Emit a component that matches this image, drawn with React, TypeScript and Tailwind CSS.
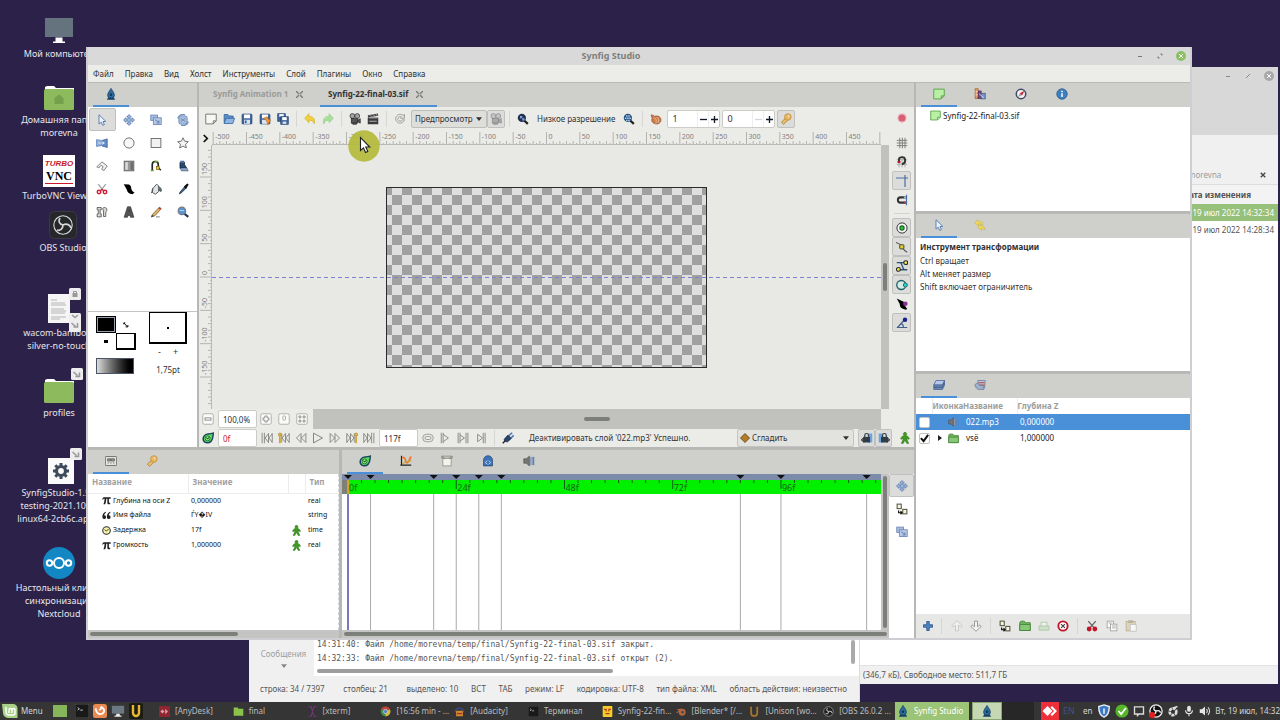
import React, { useState } from 'react';

type IconName = keyof typeof icons;

const blue = '#5b7fb5';
const ink = '#1d1f21';

// All glyphs are drawn on a 16x16 grid
const icons = {
  drop: (
    <>
      <path d="M8 .5c1 2.500 4.500 5.500 4.500 9a4.500 4.500 0 0 1-9 0C3.500 6 7 3 8 .5z" fill="#2b6c9e" stroke="#173f63" />
      <path d="M4 13h8l1.500 2.500h-11z" fill="#173f63" />
      <circle cx="8" cy="9" r="1.600" fill="#14344f" />
    </>
  ),
  arrow: <path d="M4 1v12.500l3-2.600 1.900 4.300 2.300-1-1.900-4.200h3.900z" fill="#eef3fa" stroke={blue} strokeWidth="1.300" />,
  move: (
    <g fill="#a9bfe0" stroke={blue} strokeWidth="1.200">
      <path d="M8 .8l3 3H9.200v3h3V5L15.300 8l-3.100 3V9.200h-3v3H11l-3 3-3-3h1.800v-3h-3V11L.7 8l3.100-3v1.800h3v-3H5z" />
    </g>
  ),
  scale: (
    <g fill="#a9bddd" stroke="#6f8cbb" strokeWidth="1.200">
      <rect x="1" y="1.500" width="9" height="7" />
      <rect x="4.500" y="5" width="10.500" height="9" fill="#b9cae6" />
      <path d="M7 7.500l5 4M12 8.500v3.500H8.500" fill="none" strokeWidth="1.500" />
    </g>
  ),
  rotate: (
    <g fill="#a9bddd" stroke="#6f8cbb" strokeWidth="1.200">
      <rect x="2.500" y="2.500" width="11" height="11" rx="2.500" />
      <path d="M1 6a7 7 0 0 1 9.500-5M15 10a7 7 0 0 1-9.500 5" fill="none" strokeWidth="1.700" />
      <path d="M5 6l6 4M11 6l-6 4" />
    </g>
  ),
  mirror: (
    <g>
      <path d="M.5 3.500l6.500 1v7l-6.500 1z" fill="#8fb0e0" stroke={blue} />
      <path d="M8 4.500l7-2v11.500l-7-2z" fill="#5f8bc9" stroke="#3d629a" />
      <path d="M3 8h8M8 6l3 2-3 2" stroke="#dce8f8" strokeWidth="1.300" fill="none" />
    </g>
  ),
  circle: <circle cx="8" cy="8" r="6.800" fill="#f7f7f7" stroke="#666" strokeWidth="1.200" />,
  rect: <rect x="1.500" y="2" width="13" height="12" fill="#f2f2f2" stroke="#666" strokeWidth="1.200" />,
  star: <path d="M8 1l2.100 4.600 5 .6-3.700 3.400 1 5L8 12.100l-4.400 2.500 1-5L.9 6.200l5-.6z" fill="#f5f5f5" stroke="#666" strokeWidth="1.200" />,
  polygon: <path d="M1 9l7-6.500L15 8l-4.500 6-3-1.700 2-3.300L6.500 7 4 10.500z" fill="#f0f0f0" stroke="#777" strokeWidth="1.200" />,
  gradient: (
    <g stroke="#555">
      <rect x="1.500" y="1.500" width="13" height="13" fill="#999" />
      <rect x="3" y="3" width="3.500" height="10" fill="#d9d9d9" stroke="none" />
      <rect x="10" y="3" width="3.500" height="10" fill="#6d6d6d" stroke="none" />
    </g>
  ),
  spline: (
    <g fill="none">
      <path d="M3 14V6a4 4 0 0 1 8 0c0 4 0 5 3.500 7.500" stroke="#222" strokeWidth="2.200" />
      <path d="M1 14h4M6 2h5" stroke="#6da32f" strokeWidth="2.200" />
      <rect x="8.500" y="8.500" width="3.500" height="4" fill="#f6d32d" stroke="#7a6a10" />
    </g>
  ),
  bucket: (
    <g>
      <path d="M4 3h6v3l3 5H4z" fill="#27496f" stroke="#111d2c" />
      <rect x="4.500" y="1" width="5" height="3" fill="#4b6f99" />
      <path d="M4 10.500h9l2 4H6z" fill="#8fa9c9" stroke="#2a3f5a" strokeWidth=".7" />
    </g>
  ),
  scissors: (
    <g fill="none">
      <path d="M3 1.500l6 8M13 1.500l-6 8" stroke="#a6a6a6" strokeWidth="1.800" />
      <circle cx="4" cy="12" r="2.300" stroke="#cf1f35" strokeWidth="2" />
      <circle cx="12" cy="12" r="2.300" stroke="#cf1f35" strokeWidth="2" />
      <path d="M5.500 10.500L8 8.500l2.500 2" stroke="#cf1f35" strokeWidth="1.700" />
    </g>
  ),
  width: <path d="M1 1.500l7 .5c2 .8 3 3 3 5.500 1 3 2.500 4 4.500 5L12.500 15C8 14.500 5.500 12 5 8.500z" fill="#000" />,
  fill: (
    <g stroke="#333" strokeWidth="1">
      <path d="M4 7l5-5.500L11.500 4v7.500L7 15l-4-2.500z" fill="#dfe3e6" />
      <path d="M11 5c3 0 4.500 3 4 6-2.500.5-3-1.500-3-3" fill="#5e7c8a" />
      <path d="M1.500 13.500c2-2 1-4 2-6.500" fill="none" />
    </g>
  ),
  eyedrop: (
    <g>
      <path d="M14.500 1.500l-4 3-6 7-1.500 3 3-1.500 6-6z" fill="#356393" stroke="#1b2b3c" />
      <path d="M9 5l3 3 3.500-6-2-1.500z" fill="#111" />
    </g>
  ),
  skeleton: (
    <g fill="#d6d6d2" stroke="#444">
      <path d="M1.500 2h5.500v3H5.500v5.500H7v4H1.500v-4H3V5H1.500z" />
      <path d="M9 3c2-2 5.500-1 5.500 2 0 2-1.500 2-1.500 4v5h-3V8z" />
    </g>
  ),
  text: <path d="M6 1h4l4.500 14H10l-.6-2.500H6.600L6 15H1.500zM7.300 9.500h1.500L8 5.500z" fill="#555" stroke="#222" strokeWidth=".8" fillRule="evenodd" />,
  pencil: (
    <g>
      <path d="M12.500 1.500l2.500 2L6.500 13 2 14.500 3.500 11z" fill="#e3b56c" stroke="#7a5121" />
      <path d="M11 3l2.500 2L15 3.500l-2.500-2z" fill="#b83c32" />
      <path d="M2 14.500l1-2.500 1.500 1.500zM8 14.500h5" fill="#222" stroke="#555" />
    </g>
  ),
  zoom: (
    <g>
      <path d="M9.500 10l5.500 4.500" stroke="#22324d" strokeWidth="2.800" />
      <circle cx="6.500" cy="6.500" r="5" fill="#5a93cf" stroke="#75797f" strokeWidth="1.500" />
      <path d="M3.500 6h6" stroke="#cfe3fa" />
    </g>
  ),
  newfile: <path d="M1 1.500h14v9L11 14.500H1zM15 10.500h-4v4" fill="#f7f7f3" stroke="#777" strokeWidth="1.300" />,
  open: (
    <g stroke="#2c5d95">
      <path d="M1.500 13V2h5L8 4h5.500v3" fill="#5c8fca" />
      <path d="M1.500 14L4 7h11.500L13 14z" fill="#8db6e4" />
    </g>
  ),
  save: (
    <g>
      <rect x="1.500" y="1.500" width="13" height="13" rx="1" fill="#3e66a0" stroke="#20406d" />
      <rect x="4" y="2" width="8" height="5" fill="#fff" />
      <rect x="4" y="9" width="8" height="5.500" fill="#dde3ea" />
      <rect x="5" y="10" width="2.500" height="3.500" fill="#3e66a0" />
    </g>
  ),
  saveas: (
    <g>
      <rect x="1.500" y="1.500" width="13" height="13" rx="1" fill="#3e66a0" stroke="#20406d" />
      <rect x="4" y="2" width="8" height="5" fill="#fff" />
      <rect x="4" y="9" width="8" height="5.500" fill="#dde3ea" />
      <path d="M6 7l5-2 1 3 3.500 1L12 15.500 10 10z" fill="#f29a3a" stroke="#b65d10" strokeWidth=".8" />
    </g>
  ),
  saveall: (
    <g stroke="#20406d">
      <rect x="1" y="1" width="10" height="10" fill="#3e66a0" />
      <rect x="3" y="1.500" width="6" height="3.500" fill="#fff" stroke="none" />
      <rect x="5" y="5" width="10" height="10" fill="#3e66a0" />
      <rect x="7" y="5.500" width="6" height="4" fill="#fff" stroke="none" />
      <rect x="7.500" y="11.500" width="5" height="3" fill="#dde3ea" stroke="none" />
    </g>
  ),
  undo: <path d="M6.500 1v3.500c5 0 9 2.500 7 10-.5-3.500-3-5-7-5V13L1 7z" fill="#f2d13c" stroke="#d0a817" strokeWidth=".8" />,
  redo: <path d="M9.500 1v3.500c-5 0-9 2.500-7 10 .5-3.500 3-5 7-5V13L15 7z" fill="#a8e09b" stroke="#86cc79" strokeWidth=".8" />,
  camera: (
    <g fill="#555" stroke="#222" strokeWidth=".9">
      <circle cx="4.500" cy="4" r="3.200" fill="#a5a5a5" />
      <circle cx="11" cy="4" r="3.200" fill="#a5a5a5" />
      <rect x="3" y="7.500" width="8.500" height="6" />
      <path d="M11.500 9.500l3.500-2v6l-3.500-2zM5 13.500h5V15H5z" />
    </g>
  ),
  cameraOff: (
    <g fill="#aaa" stroke="#858585" strokeWidth=".9">
      <circle cx="4.500" cy="4" r="3.200" fill="#c5c5c5" />
      <circle cx="11" cy="4" r="3.200" fill="#c5c5c5" />
      <rect x="3" y="7.500" width="8.500" height="6" />
      <path d="M11.500 9.500l3.500-2v6l-3.500-2zM5 13.500h5V15H5z" />
    </g>
  ),
  clapper: (
    <g>
      <path d="M1 3L14.500.5l.5 3L1.500 6z" fill="#444" />
      <rect x="1" y="6" width="14" height="9" fill="#3b3b3b" />
      <path d="M4 3l2 2M8 2l2 2M12 1.500l1.500 2M3 6.500h11M3 11h10" stroke="#bbb" strokeWidth="1.200" />
    </g>
  ),
  refresh: <path d="M12.500 3.500A6 6 0 1 0 14 9h-3a3 3 0 1 1-1-3.500L8.500 7H14V1.500z" fill="#e3e3e0" stroke="#a3a3a3" strokeWidth="1.300" />,
  resDown: (
    <g>
      <path d="M9 9.500l5.500 5" stroke="#222" strokeWidth="2.800" />
      <circle cx="6.500" cy="6.500" r="5.500" fill="#23324e" />
      <path d="M4 4h3v3H4zM7 7h3v3H7z" fill="#7ba3dd" />
    </g>
  ),
  resUp: (
    <g>
      <path d="M9 9.500l5.500 5" stroke="#222" strokeWidth="2.800" />
      <circle cx="6.500" cy="6.500" r="5.500" fill="#24507c" />
      <path d="M4 3h2v2H4zM7 3h2v2H7zM2.500 6h2v2h-2zM5.500 6h2v2h-2zM8.500 6h2v2h-2zM4 9h2v2H4zM7 9h2v2H7z" fill="#b9d5f5" />
    </g>
  ),
  onion: (
    <g>
      <path d="M1.500 2.500c2 0 3.500 1 4.500 2C10 3 15 5 14.500 10c-.5 4-5 5.500-8.500 4S1.500 10 3 7z" fill="#cf7e4e" stroke="#8b4a26" />
      <path d="M5 6c3 1 4 4 3 8M9 5c2.500 2 3 5 2 8" fill="none" stroke="#f0c3a2" />
    </g>
  ),
  key: (
    <g>
      <path d="M9.500 7.500l-6.500 6.500" stroke="#b5852f" strokeWidth="5" />
      <path d="M9.500 7.500l-6 6" stroke="#e8bd70" strokeWidth="3.200" />
      <circle cx="10.500" cy="5.300" r="4.400" fill="#e8b965" stroke="#c08a38" />
      <circle cx="11.500" cy="4.300" r="1.200" fill="#f7e2b7" />
    </g>
  ),
  record: <circle cx="8" cy="8" r="5.500" fill="#d95f74" stroke="#efb9c1" strokeWidth="1.500" />,
  grid: <path d="M5 1v14M8.500 1v14M12 1v14M1 4.500h14M1 8h14M1 11.500h14" stroke="#777" strokeWidth="1.200" />,
  snapGrid: (
    <g fill="none">
      <path d="M4 1v14M8 1v14M12 1v14M1 5h14M1 11h14" stroke="#999" />
      <path d="M4 9V6a4 4 0 0 1 8-1c1 4-1 5-4 6" stroke="#333" strokeWidth="2.500" />
      <path d="M2 8h4" stroke="#c4172b" strokeWidth="2.500" />
    </g>
  ),
  guide: <path d="M0 4h16M12 0v16" stroke="#4a6fa5" strokeWidth="1.600" />,
  snapGuide: (
    <g fill="none">
      <path d="M14 1v14" stroke="#4a6fa5" strokeWidth="1.600" />
      <path d="M13 4.500H6a3.500 3.500 0 0 0 0 7h7" stroke="#333" strokeWidth="2.700" />
      <path d="M10.500 4.500H13" stroke="#a4b8c9" strokeWidth="2.700" />
      <path d="M10.500 11.500H13" stroke="#b13543" strokeWidth="2.700" />
    </g>
  ),
  position: (
    <g>
      <circle cx="8" cy="8" r="6.800" fill="#f3f7f3" stroke="#333" strokeWidth="1.300" />
      <circle cx="8" cy="8" r="2.800" fill="#27c83a" stroke="#1b5e22" strokeWidth="1.500" />
    </g>
  ),
  vertex: (
    <g>
      <path d="M0 2c4 1 6 3 7.500 5s2 5 7.500 8" fill="none" stroke="#555" strokeWidth="1.600" />
      <rect x="5" y="5" width="5.500" height="5.500" rx="1" fill="#e3d12c" stroke="#333" strokeWidth="1.200" />
    </g>
  ),
  tangent: (
    <g fill="none" stroke="#223" strokeWidth="1.400">
      <path d="M1 3.500h11M4 13h11M6 4c3 2 2 6 5 9" stroke="#2b5672" strokeWidth="1.700" />
      <circle cx="13" cy="3.500" r="2.600" fill="#f1e63c" />
      <circle cx="3.200" cy="12.500" r="2.600" fill="#f1e63c" />
    </g>
  ),
  radius: (
    <g>
      <circle cx="7" cy="8" r="6" fill="#d9ebe9" stroke="#1e6161" strokeWidth="1.700" />
      <circle cx="12.500" cy="8" r="2.700" fill="#29d3d3" stroke="#1e6161" strokeWidth="1.200" />
    </g>
  ),
  widthHandle: (
    <g>
      <path d="M1 .5l7 3.500c3 1 3 2 3 5l4 5.500-2 1C7 14.500 5 12 5 8z" fill="#000" />
      <circle cx="12.500" cy="7.500" r="3" fill="#8c2f9b" />
    </g>
  ),
  angle: (
    <g>
      <path d="M2 14L12 3M1 14h14M7 8.500c2 1 3 3 3 5.500" fill="none" stroke="#44618b" strokeWidth="1.600" />
      <circle cx="12" cy="3.500" r="3" fill="#16228c" />
    </g>
  ),
  zoomOut: (
    <g fill="#fbfbfa" stroke="#8a8a88" strokeWidth="1.200">
      <rect x="1" y="1" width="14" height="14" rx="2" stroke="#aaa" />
      <rect x="4" y="6.500" width="8" height="3" />
    </g>
  ),
  zoomIn: (
    <g fill="#fbfbfa" stroke="#8a8a88" strokeWidth="1.200">
      <rect x="1" y="1" width="14" height="14" rx="2" stroke="#aaa" />
      <path d="M6.500 4h3v2.500H12v3H9.500V12h-3V9.500H4v-3h2.500z" />
    </g>
  ),
  zoomNorm: (
    <g fill="#fbfbfa" stroke="#a5a5a3" strokeWidth="1.200">
      <rect x="1" y="1" width="14" height="14" rx="2" stroke="#aaa" />
      <rect x="6.500" y="4" width="3.500" height="5.500" rx="1" />
    </g>
  ),
  zoomFit: (
    <g fill="#fbfbfa" stroke="#8a8a88" strokeWidth="1.200">
      <rect x="1" y="1" width="14" height="14" rx="2" stroke="#aaa" />
      <path d="M4 4h2.500v2.500H4zM9.500 4H12v2.500H9.500zM4 9.500h2.500V12H4zM9.500 9.500H12V12H9.500z" />
    </g>
  ),
  timetrack: (
    <g>
      <path d="M15 1.500c-.5 5 0 8-3 11-3 3-8.500 2.500-10-1C.5 7 3.500 3 8 2.500c3 0 5.500-.5 7-1z" fill="#57dd5e" stroke="#1d4562" strokeWidth="2" />
      <circle cx="7.500" cy="8.500" r="3.300" fill="#8bef8b" stroke="#155c1a" />
      <path d="M6 7.500l1.500 2 2-2.500" fill="none" stroke="#111" strokeWidth="1.200" />
    </g>
  ),
  curves: (
    <g fill="none">
      <path d="M2 1v13M.5 13.500H15" stroke="#222" strokeWidth="1.600" />
      <path d="M3 4c2-2 4 0 4.500 4s4 3 7-6" stroke="#ec7a2b" strokeWidth="2.400" />
      <path d="M3 11.500c4-1 6-4 12-4" stroke="#c9a23f" strokeWidth="1.400" />
    </g>
  ),
  canvases: (
    <g fill="#f4f4ee" stroke="#8b8b80">
      <rect x="2.500" y="4" width="11" height="10.500" />
      <path d="M1 1.500h14v3H1z" fill="#c9c9bd" />
      <path d="M1 1.500L5 5M15 1.500L11 5" strokeWidth="1.500" />
    </g>
  ),
  keyBag: (
    <g>
      <path d="M2 14.500V7a6 6 0 0 1 12 0v7.500z" fill="#3f73b5" stroke="#24497c" />
      <path d="M7 7.500L4.500 10 7 12.500M9 7.500l2.500 2.500L9 12.500" fill="none" stroke="#cfe0f8" strokeWidth="1.200" />
    </g>
  ),
  sound: (
    <g>
      <path d="M1 5h3.500l4-3.500v13l-4-3.500H1z" fill="#757575" stroke="#3d3d3d" strokeWidth=".7" />
      <rect x="9.500" y="2.500" width="2" height="11" fill="#8a97aa" />
      <rect x="12.500" y="2.500" width="2.500" height="11" fill="#5c83ba" />
    </g>
  ),
  params: (
    <g fill="#e4e4df" stroke="#555">
      <rect x=".5" y="2" width="15" height="12" rx="1" />
      <path d="M3.500 5h4v3h-4zM8.500 5h4v3h-4zM3.500 10.500h2M7 10.500h2M10.500 10.500h2" fill="#999" />
    </g>
  ),
  pi: <path d="M.5 6c.5-3 2-3.800 4-3.800h11V5H12.300v6c0 1.200 1 1.500 2.200.8v2.200c-2.700 1.200-5 .5-5-2.200V5H7.500c0 4-.5 7-1.800 9.800H2.500c1.400-2.800 2-6 2-9.800-1.700 0-2.200.3-2.700 1.500z" fill={ink} />,
  quote: <path d="M6.500 1.500C2 4 .5 7 .7 10.500A3.300 3.300 0 1 0 4 7.500C4 6 5 4 7 3zM14.500 1.500C10 4 8.500 7 8.700 10.500a3.300 3.300 0 1 0 3.300-3C12 6 13 4 15 3z" fill={ink} />,
  clock: (
    <g>
      <circle cx="8" cy="8" r="6.700" fill="#f4f3a8" stroke="#333" strokeWidth="2" />
      <path d="M4.500 6.500L8 9l4-4" fill="none" stroke="#333" strokeWidth="1.600" />
    </g>
  ),
  man: <path d="M8 .5a2.200 2.200 0 0 1 1.300 4L12 6l2 3-1.500.8L10.800 8v2.500l2.200 4.700h-2.600L8 11l-2.400 4.200H3l2.200-4.700V8L3.500 9.800 2 9l2-3 2.700-1.500A2.200 2.200 0 0 1 8 .5z" fill="#3f9a22" stroke="#25660f" strokeWidth=".6" />,
  waypoint: <path d="M8 .8L15.200 8 8 15.200.8 8z" fill="#b57c22" stroke="#4a3413" strokeWidth="1.200" />,
  lockPast: (
    <g>
      <path d="M10 2h5v12h-5z" fill="#6aa3de" />
      <rect x="3" y="6.500" width="9" height="7.500" fill="#333c45" />
      <path d="M5 7V4.500a2.500 2.500 0 0 1 5 0V7M.5 10.500l3-2.500v5z" fill="none" stroke="#333c45" strokeWidth="1.600" />
    </g>
  ),
  lockFuture: (
    <g>
      <path d="M1 2h5v12H1z" fill="#6aa3de" />
      <rect x="4" y="6.500" width="9" height="7.500" fill="#333c45" />
      <path d="M6 7V4.500a2.500 2.500 0 0 1 5 0V7M15.500 10.500l-3-2.500v5z" fill="none" stroke="#333c45" strokeWidth="1.600" />
    </g>
  ),
  plug: (
    <g>
      <path d="M1 15l4-4" stroke="#222" strokeWidth="2" />
      <path d="M3 9.500l5-5.500 4.500 4.500-5 4.500C5 13.500 2.500 12 3 9.500z" fill="#27456b" stroke="#16283f" />
      <path d="M9 5l4.500-4M12 8l3.500-3.500" stroke="#4c78ae" strokeWidth="2.200" />
    </g>
  ),
  first: <path d="M1.500 1v14M4.500 1v14M10 2L5.500 8l4.500 6zM15 2l-4.500 6 4.500 6z" fill="none" stroke="#82827f" strokeWidth="1.200" />,
  prevKey: (
    <g fill="none" stroke="#82827f" strokeWidth="1.200">
      <path d="M10 2L5.500 8l4.500 6zM15 2l-4.500 6 4.500 6zM5 2v12" />
      <path d="M2.500 6v9" stroke="#d0a63a" strokeWidth="2.500" />
      <circle cx="2.500" cy="3.500" r="2" fill="#e2bb50" stroke="#b08a2c" />
    </g>
  ),
  prev: <path d="M8 2L2 8l6 6zM14.500 2l-6 6 6 6z" fill="none" stroke="#82827f" strokeWidth="1.200" />,
  play: <path d="M2 1.500L14 8 2 14.500z" fill="none" stroke="#82827f" strokeWidth="1.300" />,
  next: <path d="M8 2l6 6-6 6zM1.500 2l6 6-6 6z" fill="none" stroke="#82827f" strokeWidth="1.200" />,
  nextKey: (
    <g fill="none" stroke="#82827f" strokeWidth="1.200">
      <path d="M6 2l4.500 6L6 14zM1 2l4.500 6L1 14zM11 2v12" />
      <path d="M13.500 6v9" stroke="#d0a63a" strokeWidth="2.500" />
      <circle cx="13.500" cy="3.500" r="2" fill="#e2bb50" stroke="#b08a2c" />
    </g>
  ),
  last: <path d="M14.500 1v14M11.500 1v14M6 2l4.500 6L6 14zM1 2l4.500 6L1 14z" fill="none" stroke="#82827f" strokeWidth="1.200" />,
  loop: (
    <g fill="none" stroke="#9b9b98" strokeWidth="1.300">
      <rect x="1" y="3" width="14" height="10" rx="5" />
      <rect x="4" y="6" width="8" height="4" rx="2" />
    </g>
  ),
  boundIn: <path d="M3 1v14M5.500 1v14M5.500 3l7 5-7 5" fill="none" stroke="#82827f" strokeWidth="1.200" />,
  bounds: <path d="M1.500 1v14M4 1v14M4 4l6 4-6 4M12 1v14M14.500 1v14" fill="none" stroke="#82827f" strokeWidth="1.200" />,
  boundOut: <path d="M3.500 3l6.500 5-6.500 5zM11 1v14M13.500 1v14" fill="none" stroke="#82827f" strokeWidth="1.200" />,
  note: <path d="M1 1.500h14v9L11 14.500H1zM15 10.500h-4v4" fill="#b9f0a5" stroke="#5fa34c" strokeWidth="1.300" />,
  library: (
    <g>
      <rect x="1.500" y="1" width="4" height="13" fill="#e2a06b" stroke="#a7602c" />
      <rect x="5.500" y="4" width="4" height="10" fill="#7a4a84" stroke="#4f2a59" />
      <rect x="9.500" y="7" width="5.500" height="7.500" fill="#7894c4" stroke="#3d5b8f" />
      <path d="M2 5h3M2 9h3M7 8l6 5" stroke="#fff" />
    </g>
  ),
  compass: (
    <g>
      <circle cx="8" cy="8" r="6.300" fill="#f7eeee" stroke="#3b4a66" strokeWidth="2" />
      <path d="M12.500 3.500L9.500 10l-3-3z" fill="#c81d30" />
      <path d="M4 12l5-2.500L6.500 7z" fill="#9a9a9a" />
    </g>
  ),
  info: (
    <g>
      <circle cx="8" cy="8" r="7" fill="#3f7fbf" stroke="#28598e" />
      <path d="M7 7h2v5H7zM7 3.500h2v2H7z" fill="#fff" />
    </g>
  ),
  history: (
    <g fill="#efd95f" stroke="#cbb43a" strokeWidth=".8">
      <path d="M5 1l.5 2.700c4.500-1 7 1 6 4.500-1-2-3-2-5.500-1.500L6.500 9.500 1 5z" />
      <path d="M8.500 7.500l.5 2c3-.5 6 1 5 5-1.500-2-2.500-2-4.500-2l.5 2.500-5-4z" />
    </g>
  ),
  layers: (
    <g stroke="#4a6390">
      <path d="M4 2h11.500l-3 6H1z" fill="#b4c9ea" />
      <path d="M1 8h11.500l3-6v3l-3 6H1zM1 11h11.500l3-6v3l-3 6H1z" fill="#6d87b3" />
    </g>
  ),
  palette: (
    <g stroke="#6a7898">
      <path d="M5 2h10l-1 10H6z" fill="#b9c8e0" />
      <path d="M6 5h8M6 8h8" stroke="#c0392b" strokeWidth="1.300" />
      <path d="M1 8c2-3 5-3 6.500.5l5.500.5v5H7c-3 0-5-3-6-6z" fill="#9fb0cc" />
    </g>
  ),
  folder: (
    <g stroke="#3f7d33">
      <path d="M1 14V3l1.500-1.500h4.500L8.500 3.500H15V14z" fill="#6fb35f" />
      <path d="M1 14V6h14v8z" fill="#86c877" />
    </g>
  ),
  folderDim: (
    <g stroke="#a5bfa0">
      <path d="M4 8V3h8v5" fill="#eef3ec" />
      <path d="M1.500 13.500V8h13v5.500z" fill="#cfe0ca" />
    </g>
  ),
  group: (
    <g fill="#f4f4e4" stroke="#55553a" strokeWidth="1.400">
      <rect x="1.500" y="1.500" width="5.500" height="6" />
      <rect x="9" y="8.500" width="5.500" height="6" />
      <path d="M3.500 10v3h4M6 11l2 2-2 2" fill="none" stroke="#111" strokeWidth="1.600" />
    </g>
  ),
  plus: <path d="M6.300 2h3.400v4.300H14v3.400H9.700V14H6.300V9.700H2V6.300h4.300z" fill="#4f83c4" stroke="#234f8a" />,
  up: <path d="M8 1l7 6.500-2 1.700L10 7v7.500H6V7L3 9.200 1 7.500z" fill="#f0f0ee" stroke="#bdbdba" />,
  down: <path d="M8 15l7-6.500-2-1.700L10 9V1.500H6V9L3 6.800 1 8.500z" fill="#f4f4f2" stroke="#7e7e7b" />,
  remove: (
    <g fill="none" stroke="#c3152a">
      <circle cx="8" cy="8" r="6.200" strokeWidth="2.500" fill="#fff" />
      <path d="M5.500 5.500l5 5M10.500 5.500l-5 5" stroke="#444" strokeWidth="1.600" />
    </g>
  ),
  cut: (
    <g>
      <path d="M3 1.500l7 8M13 1.500l-7 8" stroke="#666" strokeWidth="1.800" />
      <circle cx="4.200" cy="12" r="3.200" fill="#c3152a" />
      <circle cx="11.800" cy="12" r="3.200" fill="#c3152a" />
    </g>
  ),
  copy: (
    <g fill="#fafafa" stroke="#999">
      <rect x="1.500" y="1.500" width="8.500" height="9" />
      <rect x="6" y="5.500" width="8.500" height="9" />
      <path d="M8 8h5M8 10.500h5M3.500 4h4" />
    </g>
  ),
  paste: (
    <g fill="#ded3bb" stroke="#b5a98e">
      <rect x="1.500" y="2" width="12" height="12.500" />
      <rect x="5" y="1" width="5" height="2.500" fill="#bbb" />
      <path d="M7 6h8v9H7z" fill="#f7f7f7" stroke="#bbb" />
    </g>
  ),
};

function Icon({ name, className = 'size-3' }: { name: IconName; className?: string }) {
  return (
    <svg viewBox="0 0 16 16" className={`${className} shrink-0`} aria-hidden="true">
      {icons[name]}
    </svg>
  );
}

interface IconButtonProps {
  icon: IconName;
  label: string;
  pressed?: boolean;
  className?: string;
}

function IconButton({ icon, label, pressed, className = 'size-[18px]' }: IconButtonProps) {
  return (
    <button
      aria-label={label}
      aria-pressed={pressed}
      className={`${className} shrink-0 flex items-center justify-center rounded-xs border ${
        pressed ? 'bg-[#dcddda] border-[#c0c1be]' : 'border-transparent hover:bg-black/5'
      }`}
    >
      <Icon name={icon} />
    </button>
  );
}

function Separator() {
  return <span className="w-px h-4 mx-1 bg-[#d6d6d2] shrink-0" />;
}

// Notebook tabs made of icons, used by every dock
function DockTabs({ tabs }: { tabs: { icon: IconName; label: string }[] }) {
  const [active, setActive] = useState(0);
  return (
    <div role="tablist" className="h-[25px] shrink-0 flex gap-[5px] px-[5px] bg-[#cfcfcb] border-t border-[#b9bab6]">
      {tabs.map((tab, i) => (
        <button
          key={tab.label}
          role="tab"
          aria-label={tab.label}
          aria-selected={i === active}
          onClick={() => setActive(i)}
          className={`w-9 flex items-center justify-center border-b-2 ${i === active ? 'border-[#4a90d9]' : 'border-transparent'}`}
        >
          <Icon name={tab.icon} />
        </button>
      ))}
    </div>
  );
}

function Spin({ label, value, minusOff }: { label: string; value: string; minusOff?: boolean }) {
  return (
    <div className="w-[53px] h-[18px] mr-0.5 flex bg-white border border-[#cbcbc8] rounded-xs text-[9px] shrink-0">
      <input aria-label={label} defaultValue={value} className="w-0 flex-1 min-w-0 pl-1 outline-none" />
      <button aria-label={`${label} −`} className={`w-[11px] border-l border-[#eee] flex items-center justify-center ${minusOff ? 'text-gray-300' : 'text-gray-900'}`}>
        <svg viewBox="0 0 8 8" className="size-[7px]"><path d="M0 4h8" stroke="currentColor" strokeWidth="1.500" /></svg>
      </button>
      <button aria-label={`${label} +`} className="w-[11px] border-l border-[#eee] flex items-center justify-center text-gray-900">
        <svg viewBox="0 0 8 8" className="size-[7px]"><path d="M0 4h8M4 0v8" stroke="currentColor" strokeWidth="1.500" /></svg>
      </button>
    </div>
  );
}

const menu = ['Файл', 'Правка', 'Вид', 'Холст', 'Инструменты', 'Слой', 'Плагины', 'Окно', 'Справка'];

const tools: { icon: IconName; label: string }[] = [
  { icon: 'arrow', label: 'Трансформация' },
  { icon: 'move', label: 'Плавное перемещение' },
  { icon: 'scale', label: 'Масштаб' },
  { icon: 'rotate', label: 'Вращение' },
  { icon: 'mirror', label: 'Зеркало' },
  { icon: 'circle', label: 'Круг' },
  { icon: 'rect', label: 'Прямоугольник' },
  { icon: 'star', label: 'Звезда' },
  { icon: 'polygon', label: 'Многоугольник' },
  { icon: 'gradient', label: 'Градиент' },
  { icon: 'spline', label: 'Сплайн' },
  { icon: 'bucket', label: 'Чернила' },
  { icon: 'scissors', label: 'Вырезание' },
  { icon: 'width', label: 'Ширина' },
  { icon: 'fill', label: 'Заливка' },
  { icon: 'eyedrop', label: 'Пипетка' },
  { icon: 'skeleton', label: 'Скелет' },
  { icon: 'text', label: 'Текст' },
  { icon: 'pencil', label: 'Эскиз' },
  { icon: 'zoom', label: 'Лупа' },
];

function Toolbox() {
  return (
    <section className="w-[109px] shrink-0 flex flex-col bg-white">
      <DockTabs tabs={[{ icon: 'drop', label: 'Инструменты' }]} />
      <div className="grid grid-cols-4 p-px">
        {tools.map((tool, i) => (
          <IconButton key={tool.label} icon={tool.icon} label={tool.label} pressed={i === 0} className="h-[23px]" />
        ))}
      </div>
      <div className="mt-auto h-[136px] flex justify-between pl-2 pr-2.5 border-t border-[#c4c4c2]">
        <div className="w-10 pt-1">
          <div className="grid grid-cols-2 items-center justify-items-center">
            <button aria-label="Цвет контура" className="w-5 h-[17px] bg-black border border-black outline-1 -outline-offset-2 outline-gray-400" />
            <svg viewBox="0 0 8 8" className="size-1.5"><path d="M1.500 1.500l4 4.500M1 3V1.200h2M3.500 6.500H6.500V4" stroke="#000" fill="none" strokeWidth="1.300" /></svg>
            <span className="w-1 h-[3px] bg-black" />
            <button aria-label="Цвет заливки" className="w-5 h-[17px] bg-white border border-b-2 border-r-2 border-black" />
          </div>
          <button aria-label="Градиент по умолчанию" className="block mt-2 w-[38px] h-4 border border-gray-600 bg-linear-to-r from-[#ddd] to-black" />
        </div>
        <div className="w-[38px] flex flex-col items-center">
          <button aria-label="Размер кисти" className="w-[38px] h-8 bg-white border border-b-2 border-r-2 border-black flex items-center justify-center">
            <span className="size-[2px] bg-black" />
          </button>
          <div className="flex gap-3 text-[9px] leading-4">
            <button>-</button>
            <button>+</button>
          </div>
          <span className="text-[8px] leading-5">1,75pt</span>
        </div>
      </div>
    </section>
  );
}

const unit = 2 / 3;

// Both rulers grow from the middle of the canvas, where zero is
function HorizontalRuler() {
  const ticks = Array.from({ length: 201 }, (_, i) => -500 + i * 5);
  return (
    <svg className="flex-1 min-w-0 h-[14px] border-b border-[#b9bab6]" aria-hidden="true">
      <svg x="50%" className="overflow-visible">
        {ticks.map((t) => (
          <path key={t} d={`M${t * unit} ${t % 50 === 0 ? 1 : t % 10 === 0 ? 10 : 12}V14`} stroke="#b3b4b1" />
        ))}
        {ticks.filter((t) => t % 50 === 0 && t < 500).map((t) => (
          <text key={t} x={t * unit + 2} y="8" fontSize="7" fill="#80817e">{t}</text>
        ))}
      </svg>
    </svg>
  );
}

function VerticalRuler() {
  const ticks = Array.from({ length: 77 }, (_, i) => -190 + i * 5);
  return (
    <svg className="w-[13px] h-full shrink-0 border-r border-[#b9bab6]" aria-hidden="true">
      <svg y="50%" className="overflow-visible">
        {ticks.map((t) => (
          <path key={t} d={`M${t % 50 === 0 ? 1 : t % 10 === 0 ? 9 : 11} ${-t * unit}H13`} stroke="#b3b4b1" />
        ))}
        {[150, 100, 50, 0, -50, -100, -150].map((t) => (
          <text key={t} x="2" y="8" fontSize="7" fill="#80817e" transform={`translate(0 ${-t * unit}) rotate(-90)`}>{t}</text>
        ))}
      </svg>
    </svg>
  );
}

const handles: { icon: IconName; label: string; pressed?: boolean }[] = [
  { icon: 'position', label: 'Позиция', pressed: true },
  { icon: 'vertex', label: 'Вершины', pressed: true },
  { icon: 'tangent', label: 'Касательные', pressed: true },
  { icon: 'radius', label: 'Радиус', pressed: true },
  { icon: 'widthHandle', label: 'Ширина' },
  { icon: 'angle', label: 'Угол', pressed: true },
];

function CanvasPanel() {
  return (
    <section className="flex-1 min-w-0 flex flex-col bg-[#ebebe8]">
      <div role="tablist" className="h-[25px] shrink-0 flex bg-[#cfcfcb] border-t border-[#b9bab6] text-[8px] font-bold">
        <button role="tab" className="w-[121px] pl-3.5 flex items-center gap-2 text-[#9a9b98] border-b-2 border-transparent">
          Synfig Animation 1
          <CloseMark />
        </button>
        <button role="tab" aria-selected="true" className="w-[117px] pl-2 flex items-center gap-2 text-[#303234] border-b-2 border-[#4a90d9]">
          Synfig-22-final-03.sif
          <CloseMark />
        </button>
      </div>

      <div className="flex-1 min-h-0 flex">
        <div className="flex-1 min-w-0 flex flex-col">
          <div className="h-6 shrink-0 flex items-center pl-[3px] text-[8px] text-[#303234]">
            <IconButton icon="newfile" label="Новый" />
            <IconButton icon="open" label="Открыть" />
            <IconButton icon="save" label="Сохранить" />
            <IconButton icon="saveas" label="Сохранить как" />
            <IconButton icon="saveall" label="Сохранить все" />
            <Separator />
            <IconButton icon="undo" label="Отменить" />
            <IconButton icon="redo" label="Вернуть" />
            <Separator />
            <IconButton icon="camera" label="Предпросмотр анимации" />
            <IconButton icon="clapper" label="Рендер" />
            <Separator />
            <IconButton icon="refresh" label="Обновить" />
            <div className="relative ml-0.5 shrink-0">
              <select
                aria-label="Режим просмотра"
                className="appearance-none w-[76px] h-[18px] pl-[3px] border border-[#bdbeba] rounded-xs bg-[#dededb] leading-4"
              >
                <option>Предпросмотр</option>
              </select>
              <Caret />
            </div>
            <IconButton icon="cameraOff" label="Фоновый рендер" pressed />
            <Separator />
            <IconButton icon="resDown" label="Понизить разрешение" />
            <span className="mx-[5px] whitespace-nowrap">Низкое разрешение</span>
            <IconButton icon="resUp" label="Повысить разрешение" />
            <Separator />
            <IconButton icon="onion" label="Калька" />
            <span className="w-0.5" />
            <Spin label="Прошлые кадры" value="1" />
            <Spin label="Будущие кадры" value="0" minusOff />
            <IconButton icon="key" label="Ключевые кадры" pressed />
          </div>

          <div className="h-[14px] shrink-0 flex">
            <button aria-label="Меню холста" className="w-[13px] flex items-center justify-center">
              <svg viewBox="0 0 8 10" className="w-[7px] h-[9px]"><path d="M2 1l4 4-4 4" fill="none" stroke="#111" strokeWidth="2" /></svg>
            </button>
            <HorizontalRuler />
            <span className="w-2" />
          </div>

          <div className="flex-1 min-h-0 flex">
            <VerticalRuler />
            <div className="relative flex-1 flex items-center justify-center bg-[#e8e9e4] overflow-hidden">
              <div className="w-[321px] h-[181px] border border-[#2b2b2b] bg-[repeating-conic-gradient(#a0a0a0_0_25%,#dfdfdf_0_50%)] bg-size-[20px_20px] bg-position-[15px_7px]" />
              <div className="absolute inset-x-0 top-1/2 h-px bg-[repeating-linear-gradient(90deg,#7e80d2_0_4px,transparent_4px_7px)]" />
            </div>
            <div className="w-2 bg-[#c1c2be] flex items-center justify-center">
              <span className="w-1 h-7 rounded-full bg-[#7d7f7b]" />
            </div>
          </div>

          <div className="h-5 shrink-0 flex items-center text-[8px]">
            <IconButton icon="zoomOut" label="Уменьшить" />
            <input aria-label="Масштаб" defaultValue="100,0%" className="ml-px w-[39px] h-[18px] pl-1 bg-white border border-[#cbcbc8] rounded-xs outline-none" />
            <IconButton icon="zoomIn" label="Увеличить" />
            <IconButton icon="zoomNorm" label="Масштаб 100%" />
            <IconButton icon="zoomFit" label="Вместить" />
            <div className="ml-0.5 mr-2 flex-1 h-full bg-[#c1c2be] flex items-center justify-center">
              <span className="w-[26px] h-1 rounded-full bg-[#7d7f7b]" />
            </div>
          </div>
        </div>

        <div className="w-[25px] shrink-0 flex flex-col items-center pt-0.5">
          <IconButton icon="record" label="Анимация" />
          <span className="h-1.5" />
          <IconButton icon="grid" label="Сетка" className="size-[19px]" />
          <IconButton icon="snapGrid" label="Прилипание к сетке" className="size-[19px]" />
          <IconButton icon="guide" label="Направляющие" pressed className="size-[19px]" />
          <IconButton icon="snapGuide" label="Прилипание к направляющим" className="size-[19px]" />
          <span className="my-1 w-4 h-px bg-[#d2d2ce]" />
          {handles.map((h) => (
            <IconButton key={h.label} icon={h.icon} label={h.label} pressed={h.pressed} className="size-[19px]" />
          ))}
        </div>
      </div>

      <div className="h-[18px] shrink-0 flex items-center text-[8px] text-[#303234]">
        <IconButton icon="timetrack" label="Границы времени" />
        <input aria-label="Текущий кадр" defaultValue="0f" className="ml-px mr-px w-[39px] h-[18px] pl-1 bg-white border border-[#cbcbc8] rounded-xs text-[#d0202f] outline-none" />
        <IconButton icon="first" label="В начало" className="w-[17px] h-[18px]" />
        <IconButton icon="prevKey" label="Предыдущий ключ" className="w-[17px] h-[18px]" />
        <IconButton icon="prev" label="Предыдущий кадр" className="w-[17px] h-[18px]" />
        <IconButton icon="play" label="Воспроизвести" className="w-[17px] h-[18px]" />
        <IconButton icon="next" label="Следующий кадр" className="w-[17px] h-[18px]" />
        <IconButton icon="nextKey" label="Следующий ключ" className="w-[17px] h-[18px]" />
        <IconButton icon="last" label="В конец" className="w-[17px] h-[18px]" />
        <input aria-label="Последний кадр" defaultValue="117f" className="ml-0.5 mr-px w-[39px] h-[18px] pl-1 bg-white border border-[#cbcbc8] rounded-xs outline-none" />
        <IconButton icon="loop" label="Повтор" className="w-[17px] h-[18px]" />
        <IconButton icon="boundIn" label="Начало диапазона" />
        <IconButton icon="bounds" label="Диапазон" />
        <IconButton icon="boundOut" label="Конец диапазона" />
        <Separator />
        <IconButton icon="plug" label="Состояние" className="w-[18px] h-[18px]" />
        <span className="ml-3 flex-1 whitespace-nowrap">Деактивировать слой '022.mp3' Успешно.</span>
        <div className="relative shrink-0 mr-1">
          <span className="absolute left-[3px] top-1 pointer-events-none"><Icon name="waypoint" className="size-2.5" /></span>
          <select aria-label="Интерполяция" className="appearance-none w-[117px] h-[18px] pl-[14px] border border-[#c4c5c2] rounded-xs bg-[#e2e2df] leading-4">
            <option>Сгладить</option>
          </select>
          <Caret />
        </div>
        <IconButton icon="lockPast" label="Прошлые ключи" pressed className="w-[17px] h-[18px]" />
        <IconButton icon="lockFuture" label="Будущие ключи" pressed className="w-[17px] h-[18px]" />
        <span className="w-1" />
        <IconButton icon="man" label="Режим анимации" />
      </div>
    </section>
  );
}

function Caret() {
  return (
    <svg viewBox="0 0 8 5" className="absolute right-[5px] top-[7px] w-1.5 h-1 pointer-events-none" aria-hidden="true">
      <path d="M0 0h8L4 5z" fill="#303234" />
    </svg>
  );
}

function CloseMark() {
  return (
    <svg viewBox="0 0 8 8" className="size-[7px] shrink-0" aria-hidden="true">
      <path d="M0 0l3 3M8 0L5 3M0 8l3-3M8 8L5 5" stroke="#777876" strokeWidth="1.600" />
      <rect x="2.500" y="2.500" width="3" height="3" fill="none" stroke="#8a8b88" strokeWidth=".8" />
    </svg>
  );
}

const params: { icon: IconName; name: string; value: string; type: string; animated?: boolean }[] = [
  { icon: 'pi', name: 'Глубина на оси Z', value: '0,000000', type: 'real' },
  { icon: 'quote', name: 'Имя файла', value: 'ЃY\uFFFDIV', type: 'string' },
  { icon: 'clock', name: 'Задержка', value: '17f', type: 'time', animated: true },
  { icon: 'pi', name: 'Громкость', value: '1,000000', type: 'real', animated: true },
];

function ParamsPanel() {
  return (
    <section className="w-[251px] shrink-0 flex flex-col bg-white">
      <DockTabs tabs={[{ icon: 'params', label: 'Параметры' }, { icon: 'key', label: 'Ключевые кадры' }]} />
      <div className="flex-1 border-r border-dashed border-gray-300">
        <table className="w-full table-fixed text-left text-[7px] text-[#111]">
          <colgroup>
            <col className="w-[100px]" />
            <col className="w-[100px]" />
            <col className="w-[17px]" />
            <col />
          </colgroup>
          <thead>
            <tr className="h-[19px] text-[8px] text-[#a0a19f] border-b border-[#ececec]">
              <th className="pl-1 pb-[3px] font-bold border-r border-[#ececec]">Название</th>
              <th className="pl-1 pb-[3px] font-bold border-r border-[#ececec]">Значение</th>
              <th className="border-r border-[#ececec]" />
              <th className="pl-1 pb-[3px] font-bold">Тип</th>
            </tr>
          </thead>
          <tbody>
            {params.map((p) => (
              <tr key={p.name} className="h-[15px]">
                <td className="pl-3.5">
                  <div className="flex items-center gap-0.5 whitespace-nowrap">
                    <Icon name={p.icon} className="size-[9px]" /> {p.name}
                  </div>
                </td>
                <td className="pl-[3px]">{p.value}</td>
                <td>{p.animated && <Icon name="man" className="block mx-auto size-[11px]" />}</td>
                <td className="pl-[3px]">{p.type}</td>
              </tr>
            ))}
          </tbody>
        </table>
      </div>
      <div className="h-2 bg-[#c4c5c2] flex items-center px-0.5">
        <span className="w-3/5 h-1 rounded-full bg-[#7d7f7b]" />
      </div>
    </section>
  );
}

const keyframes = [5, 19, 24, 29, 34, 87, 96, 115];

// Horizontal place of a frame inside the time strip
const at = (frame: number) => `${((6 + frame * 4.51) / 539) * 100}%`;

function Timeline() {
  return (
    <section className="flex-1 min-w-0 flex flex-col bg-white">
      <DockTabs
        tabs={[
          { icon: 'timetrack', label: 'Шкала времени' },
          { icon: 'curves', label: 'Графики' },
          { icon: 'canvases', label: 'Метаданные' },
          { icon: 'keyBag', label: 'Библиотека' },
          { icon: 'sound', label: 'Звук' },
        ]}
      />
      <div className="flex-1 min-h-0 flex">
        <div className="flex-1 min-w-0 flex flex-col bg-[#c4c5c2]">
          <div className="flex-1 min-h-0 flex">
            <svg className="flex-1 min-w-0 h-full bg-white" role="img" aria-label="Кадры">
              <rect width="100%" height="7" fill="#7b8ba9" />
              <rect y="6" width="100%" height="14" fill="#00f000" />
              <rect y="6" width="6" height="14" fill="#7d8074" />
              {Array.from({ length: 40 }, (_, i) => i * 3).map((f) => (
                <line key={f} x1={at(f)} x2={at(f)} y1="6" y2={f % 24 === 0 ? 15 : 9} stroke="#145c14" />
              ))}
              {keyframes.map((f) => (
                <line key={f} x1={at(f)} x2={at(f)} y1="20" y2="100%" stroke="#a9a9a9" />
              ))}
              <line x1={at(0)} x2={at(0)} y1="20" y2="100%" stroke="#7c77bd" strokeWidth="2" />
              <line x1={at(0)} x2={at(0)} y1="6" y2="20" stroke="#d8a02a" strokeWidth="2" />
              {[0, ...keyframes].map((f) => (
                <svg key={f} x={at(f)} y="1" className="overflow-visible">
                  <path d="M-4 0h8L0 4z" fill="#111" />
                </svg>
              ))}
              {[0, 24, 48, 72, 96].map((f) => (
                <text key={f} x={at(f)} dx="1" y="17" fontSize="9" fill="#14641a">{f}f</text>
              ))}
            </svg>
            <div className="w-2 py-0.5 flex justify-center">
              <span className="w-1 rounded-full bg-[#7d7f7b]" />
            </div>
          </div>
          <div className="h-2 flex items-center px-0.5">
            <span className="flex-1 h-1 rounded-full bg-[#7d7f7b]" />
          </div>
        </div>
        <div className="w-[25px] shrink-0 flex flex-col">
          <IconButton icon="move" label="Перемещение ключей" pressed className="h-[23px]" />
          <IconButton icon="group" label="Дублирование ключей" className="h-[23px]" />
          <IconButton icon="scale" label="Масштаб ключей" className="h-[23px]" />
        </div>
      </div>
    </section>
  );
}

function LayersPanel() {
  return (
    <section className="flex-1 min-h-0 flex flex-col bg-white">
      <DockTabs tabs={[{ icon: 'layers', label: 'Слои' }, { icon: 'palette', label: 'Наборы слоёв' }]} />
      <div className="flex-1 min-h-0">
        <table className="w-full table-fixed text-left text-[8px]">
          <colgroup>
            <col className="w-4" />
            <col className="w-[31px]" />
            <col className="w-[54px]" />
            <col />
          </colgroup>
          <thead>
            <tr className="h-4 text-[#9c9d9b]">
              <th className="border-r border-[#ececec]" />
              <th className="font-bold">Иконка</th>
              <th className="font-bold border-r border-[#ececec]">Название</th>
              <th className="font-bold">Глубина Z</th>
            </tr>
          </thead>
          <tbody>
            <tr className="h-4 bg-[#4a90d9] text-white">
              <td className="pl-[3px]"><LayerCheck label="022.mp3" /></td>
              <td className="pl-4"><Icon name="sound" className="block size-2.5" /></td>
              <td className="pl-[3px]">022.mp3</td>
              <td className="pl-[3px]">0,000000</td>
            </tr>
            <tr className="h-4 text-[#222]">
              <td className="pl-[3px]"><LayerCheck label="vsё" checked /></td>
              <td>
                <div className="flex items-center justify-between pl-1.5 pr-1">
                  <svg viewBox="0 0 4 6" className="w-1 h-1.5"><path d="M0 0l4 3-4 3z" fill="#222" /></svg>
                  <Icon name="folder" className="size-[11px]" />
                </div>
              </td>
              <td className="pl-[3px]">vsё</td>
              <td className="pl-[3px]">1,000000</td>
            </tr>
          </tbody>
        </table>
      </div>
      <div className="h-6 shrink-0 flex items-center pl-[3px] bg-[#e7e7e5]">
        <IconButton icon="plus" label="Новый слой" />
        <Separator />
        <span className="w-0.5" />
        <IconButton icon="up" label="Поднять слой" />
        <IconButton icon="down" label="Опустить слой" className="w-5 h-[18px]" />
        <Separator />
        <IconButton icon="group" label="Дублировать слой" className="w-5 h-[18px]" />
        <IconButton icon="folder" label="Группировать" className="w-5 h-[18px]" />
        <IconButton icon="folderDim" label="Разгруппировать" />
        <IconButton icon="remove" label="Удалить слой" className="w-5 h-[18px]" />
        <Separator />
        <IconButton icon="cut" label="Вырезать" className="w-5 h-[18px]" />
        <IconButton icon="copy" label="Копировать" className="w-5 h-[18px]" />
        <IconButton icon="paste" label="Вставить" />
      </div>
    </section>
  );
}

function LayerCheck({ label, checked }: { label: string; checked?: boolean }) {
  return (
    <span className="relative block size-[11px]">
      <input
        type="checkbox"
        aria-label={label}
        defaultChecked={checked}
        className="peer block appearance-none size-[11px] bg-white border border-[#c3c4c1] rounded-xs"
      />
      <svg viewBox="0 0 10 10" className="absolute inset-px size-[9px] pointer-events-none hidden peer-checked:block">
        <path d="M1 4.500l3 3.500 5-7" fill="none" stroke="#111" strokeWidth="2.200" />
      </svg>
    </span>
  );
}

function RightDock() {
  return (
    <aside className="w-[274px] shrink-0 flex flex-col gap-0.5">
      <section className="h-[129px] shrink-0 flex flex-col bg-white">
        <DockTabs
          tabs={[
            { icon: 'note', label: 'Холсты' },
            { icon: 'library', label: 'Палитра' },
            { icon: 'compass', label: 'Навигатор' },
            { icon: 'info', label: 'Информация' },
          ]}
        />
        <div className="flex items-center gap-0.5 pl-3.5 h-[17px] text-[8px] text-[#222]">
          <Icon name="note" className="size-[11px]" /> Synfig-22-final-03.sif
        </div>
      </section>
      <section className="h-[158px] shrink-0 flex flex-col bg-white">
        <DockTabs tabs={[{ icon: 'arrow', label: 'Параметры инструмента' }, { icon: 'history', label: 'История' }]} />
        <div className="pl-1 pt-0.5 text-[8px] leading-[13px] text-[#303234]">
          <h2 className="font-bold leading-[14px]">Инструмент трансформации</h2>
          <p>Ctrl вращает</p>
          <p>Alt меняет размер</p>
          <p>Shift включает ограничитель</p>
        </div>
      </section>
      <LayersPanel />
    </aside>
  );
}

function SynfigWindow() {
  return (
    <main className="absolute left-[86px] right-[88px] top-[47px] bottom-[80px] flex flex-col bg-[#b7b8b5] border-x-2 border-b-2 border-[#cfcfd3] text-[#303234]">
      <header className="h-[18px] shrink-0 flex items-center bg-[#d9d9d9] text-[9px]">
        <h1 className="flex-1 text-center font-bold text-[#7d7e7c]">Synfig Studio</h1>
        <div className="w-[56px] flex items-center justify-end gap-3 pr-1 text-[#777]">
          <button aria-label="Свернуть"><svg viewBox="0 0 8 8" className="size-2"><path d="M2 4.500h4" stroke="currentColor" /></svg></button>
          <button aria-label="Развернуть"><svg viewBox="0 0 8 8" className="size-2"><path d="M2 6l1-1M5 3l1-1M4.500 2H6v1.500M2 4.500V6h1.500" stroke="currentColor" fill="none" /></svg></button>
          <button aria-label="Закрыть" className="size-2.5 rounded-full bg-[#8bc063] flex items-center justify-center">
            <svg viewBox="0 0 8 8" className="size-2"><path d="M2 2l4 4M6 2L2 6" stroke="#fff" /></svg>
          </button>
        </div>
      </header>
      <nav className="h-[17px] shrink-0 flex items-center gap-[11px] pl-[5px] bg-[#ecece8] text-[8px]">
        {menu.map((m) => <button key={m}>{m}</button>)}
      </nav>
      <div className="flex-1 min-h-0 flex gap-0.5">
        <div className="flex-1 min-w-0 flex flex-col gap-0.5">
          <div className="flex-1 min-h-0 flex gap-0.5">
            <Toolbox />
            <CanvasPanel />
          </div>
          <div className="h-[189px] shrink-0 flex gap-[3px]">
            <ParamsPanel />
            <Timeline />
          </div>
        </div>
        <RightDock />
      </div>
    </main>
  );
}

function FileManagerWindow() {
  return (
    <section className="absolute left-[860px] right-[2px] top-[67px] bottom-[36px] flex flex-col bg-white text-[8px] text-[#555]">
      <header className="h-[68px] shrink-0 flex items-start justify-end gap-3 pt-1 pr-1 bg-[#d8d8d8] text-[#888]">
        <svg viewBox="0 0 8 8" className="size-2 mt-px"><path d="M2 4.500h4" stroke="currentColor" /></svg>
        <svg viewBox="0 0 8 8" className="size-2 mt-px"><path d="M2 6l4-4" stroke="currentColor" fill="none" /></svg>
        <svg viewBox="0 0 10 10" className="size-2.5"><circle cx="5" cy="5" r="5" fill="#a8a8a8" /><path d="M3 3l4 4M7 3L3 7" stroke="#fff" /></svg>
      </header>
      <div className="h-[50px] shrink-0 flex items-end justify-between pl-[328px] pr-2.5 bg-[#f0f0f0] border-b border-[#ddd]">
        <span className="leading-[18px] text-[#9b9b9b]">morevna</span>
        <button aria-label="Закрыть вкладку" className="h-[18px] px-0.5 flex items-center">
          <svg viewBox="0 0 8 8" className="size-1.5"><path d="M1 1l6 6M7 1L1 7" stroke="#444" strokeWidth="1.800" /></svg>
        </button>
      </div>
      <table className="w-full text-right">
        <thead>
          <tr className="h-[19px] bg-[#f3f3f3]"><th className="pr-[27px] font-bold">Дата изменения</th></tr>
        </thead>
        <tbody>
          <tr className="h-[17px] bg-[#97c07a] text-white"><td className="pr-1">19 июл 2022 14:32:34</td></tr>
          <tr className="h-[17px]"><td className="pr-1">19 июл 2022 14:28:34</td></tr>
        </tbody>
      </table>
      <footer className="mt-auto h-[19px] flex items-center pl-[3px] bg-[#f0f0f0] border-t border-[#e2e2e2]">
        (346,7 кБ), Свободное место: 511,7 ГБ
      </footer>
    </section>
  );
}

const editorStatus = ['ВСТ', 'ТАБ', 'режим: LF', 'кодировка: UTF-8', 'тип файла: XML', 'область действия: неизвестно'];

function EditorWindow() {
  return (
    <section className="absolute left-[249px] right-[420px] bottom-[18px] h-[82px] flex flex-col bg-[#f0f0f0] border-r border-[#dcdcdc] text-[8px] text-[#555]">
      <div className="h-[56px] shrink-0 flex pt-5">
        <div className="w-[65px] pt-2 pl-1 flex flex-col items-center text-[#9d9d9d]">
          Сообщения
          <svg viewBox="0 0 8 5" className="mt-1 w-1.5 h-1"><path d="M0 0h8L4 5z" fill="#888" /></svg>
        </div>
        <div className="flex-1 min-w-0 flex flex-col bg-white font-['DejaVu_Sans_Mono',monospace] text-[8px] leading-[14px] text-[#555]">
          <div className="flex-1 flex justify-between overflow-hidden">
            <div className="pl-[3px] -mt-0.5 whitespace-nowrap">
              <p>14:31:40: Файл /home/morevna/temp/final/Synfig-22-final-03.sif закрыт.</p>
              <p>14:32:33: Файл /home/morevna/temp/final/Synfig-22-final-03.sif открыт (2).</p>
            </div>
            <span className="mr-1 w-1 h-6 rounded-full bg-[#aaa]" />
          </div>
          <span className="ml-[3px] mb-[3px] w-[296px] h-1 rounded-full bg-[#9d9d9d]" />
        </div>
      </div>
      <footer className="flex-1 flex items-center justify-between pl-[11px] pr-3 whitespace-nowrap">
        <span className="pr-1.5">строка: 34 / 7397</span>
        <span className="pr-1.5">столбец: 21</span>
        <span>выделено: 10</span>
        {editorStatus.map((s) => <span key={s}>{s}</span>)}
      </footer>
    </section>
  );
}

function ShortcutBadge() {
  return (
    <svg viewBox="0 0 12 12" className="absolute -right-2 -top-2.5 size-3" aria-hidden="true">
      <rect width="12" height="12" rx="1.500" fill="#ededed" />
      <path d="M2.500 4l4 3.500M8.500 4.500v4H4.500" fill="none" stroke="#999" strokeWidth="1.600" />
    </svg>
  );
}

const folderArt = (home: boolean) => (
  <svg viewBox="0 0 32 26" className="w-8 h-[26px]">
    <path d="M2 5V2l2-1h7l2 2h18v4z" fill="#fff" />
    <rect x="1" y="4" width="30" height="21" rx="1.500" fill="#8cba5c" />
    {home && <path d="M11.500 13l4.500-3.500 4.500 3.500v6h-9z" fill="#759f4a" />}
  </svg>
);

const desktopItems = [
  {
    top: 17,
    lines: ['Мой компьютер'],
    art: (
      <svg viewBox="0 0 30 28" className="w-[30px] h-7">
        <rect x="1" y="1" width="28" height="19" fill="#65737f" />
        <path d="M11.500 20.500h7v4h2.500v1.500H9v-1.500h2.500z" fill="#fff" />
      </svg>
    ),
  },
  { top: 85, lines: ['Домашняя папка', 'morevna'], art: folderArt(true) },
  {
    top: 155,
    lines: ['TurboVNC Viewer'],
    art: (
      <span className="block w-8 h-8 bg-white text-center font-['Liberation_Sans',sans-serif] font-bold overflow-hidden">
        <span className="block pt-[3px] text-[8px] leading-[12px] italic text-[#c9192b]">TURBO</span>
        <span className="block text-[12px] leading-[13px] font-['Liberation_Serif',serif] text-black border-b border-[#c9192b] mx-0.5">VNC</span>
      </span>
    ),
  },
  {
    top: 211,
    lines: ['OBS Studio'],
    left: 8,
    art: (
      <svg viewBox="0 0 28 28" className="size-7">
        <rect x=".5" y=".5" width="27" height="27" rx="5" fill="#26272b" stroke="#3a3b40" />
        <circle cx="14" cy="14" r="9.200" fill="none" stroke="#d8d8d8" strokeWidth="1.100" />
        <path d="M14 14c-4-1-5-4-3-7M14 14c4-2 7 0 8 3M14 14c0 4-3 6-6 5" fill="none" stroke="#d8d8d8" strokeWidth="1.700" />
      </svg>
    ),
  },
  {
    top: 294,
    lines: ['wacom-bamboo-', 'silver-no-touch'],
    art: (
      <span className="relative block">
        <svg viewBox="0 0 24 30" className="w-6 h-[30px]">
          <rect x="1" width="22" height="29" fill="#f5f5f5" />
          <path d="M4 6h6M4 9h14M4 11h15M4 15h13M4 17h15M4 19h14M4 23h15M4 25h9" stroke="#b5b5b5" />
        </svg>
        <svg viewBox="0 0 12 44" className="absolute -right-2.5 -top-[6px] w-3 h-11">
          <rect width="12" height="12" rx="1.500" fill="#ededed" />
          <rect x="3.500" y="5" width="5" height="4" fill="#999" />
          <path d="M4.500 5V3.500h3V5" fill="none" stroke="#999" />
          <rect y="25" width="12" height="19" rx="1.500" fill="#ededed" />
          <path d="M3 27l3 2.500L9 27M2.500 35l4 3.500M8.500 35v4H4.500" fill="none" stroke="#999" strokeWidth="1.500" />
        </svg>
      </span>
    ),
  },
  { top: 378, lines: ['profiles'], art: <span className="relative block">{folderArt(false)}<ShortcutBadge /></span> },
  {
    top: 458,
    lines: ['SynfigStudio-1.5.1-', 'testing-2021.10.21-', 'linux64-2cb6c.appim'],
    left: 4,
    art: (
      <span className="relative block">
        <svg viewBox="0 0 26 26" className="size-[26px]">
          <rect width="26" height="26" fill="#fafafa" />
          <circle cx="13" cy="13" r="4.500" fill="none" stroke="#3d4b5c" strokeWidth="3.200" />
          <path d="M13 5v3M13 18v3M5 13h3M18 13h3M7.300 7.300l2.200 2.200M16.500 16.500l2.200 2.200M18.700 7.300l-2.200 2.200M9.500 16.500l-2.200 2.200" stroke="#3d4b5c" strokeWidth="3" />
        </svg>
        <ShortcutBadge />
      </span>
    ),
  },
  {
    top: 547,
    lines: ['Настольный клиент', 'синхронизации', 'Nextcloud'],
    art: (
      <svg viewBox="0 0 32 32" className="size-8">
        <circle cx="16" cy="16" r="16" fill="#1387c4" />
        <g fill="none" stroke="#fff" strokeWidth="2">
          <circle cx="16" cy="16" r="5" />
          <circle cx="6.500" cy="16" r="2.700" />
          <circle cx="25.500" cy="16" r="2.700" />
        </g>
      </svg>
    ),
  },
];

function Desktop() {
  return (
    <div className="absolute inset-y-0 left-0 w-[118px]">
      {desktopItems.map((item) => (
        <a
          key={item.lines[0]}
          href="#open"
          className="absolute inset-x-0 flex flex-col items-center text-[#e6e6ea] text-[9px] leading-[13px] text-center whitespace-nowrap"
          style={{ top: item.top, left: item.left ?? 0 }}
        >
          {item.art}
          <span className="mt-0.5">
            {item.lines.map((line) => <span key={line} className="block">{line}</span>)}
          </span>
        </a>
      ))}
    </div>
  );
}

const taskArt = {
  anydesk: <><rect width="16" height="16" fill="#8e2530" /><path d="M5 5l3 3-3 3-3-3zM9 4l4 4-4 4" fill="#e0a0a6" /></>,
  folder: <path d="M1 14V2h6l1 2h7v10z" fill="#8bc34a" />,
  xterm: <path d="M2 1h4l4 14h4M14 1h-4L6 15H2" fill="none" stroke="#7c2f86" strokeWidth="1.500" />,
  chrome: <><circle cx="8" cy="8" r="7" fill="#3f8f4c" /><path d="M8 8L2 4a7 7 0 0 1 12.500 1z" fill="#c8423a" /><path d="M8 8l6.500-3A7 7 0 0 1 8 15z" fill="#d9b53a" /><circle cx="8" cy="8" r="3" fill="#4b82c9" stroke="#ddd" /></>,
  audacity: <><path d="M2 9a6 6 0 0 1 12 0" fill="none" stroke="#3a4d8f" strokeWidth="2" /><rect x="3" y="7" width="10" height="8" rx="1" fill="#d08a2f" /><path d="M4 11h8" stroke="#a33" strokeWidth="2" /></>,
  terminal: <><rect width="16" height="16" rx="2" fill="#191919" stroke="#555" /><path d="M3 4l2 1.500L3 7M6 7h3" stroke="#ddd" fill="none" /></>,
  xml: <><rect x="1" width="14" height="16" rx="1" fill="#f4cf2b" /><path d="M3 5h3v3M13 5h-3v3M5 11h6" stroke="#c03a1a" strokeWidth="1.800" fill="none" /></>,
  blender: <><circle cx="9" cy="9" r="5" fill="#b8663a" /><circle cx="9.500" cy="9" r="2" fill="#35506e" /><path d="M1 10l7-6M2 5h7" stroke="#b8663a" strokeWidth="1.600" /></>,
  unison: <path d="M3 1v9a4.500 4.500 0 0 0 9 0V1" fill="none" stroke="#a8752c" strokeWidth="2.500" />,
  obs: <><circle cx="8" cy="8" r="7" fill="#1e1e1e" stroke="#aaa" /><path d="M8 8C5 7 5 5 6.500 3M8 8c3-1 5 0 5 2M8 8c0 3-2 4-4 3" stroke="#bbb" fill="none" strokeWidth="1.500" /></>,
};

const tasks: { art: keyof typeof taskArt; title: string }[] = [
  { art: 'anydesk', title: '[AnyDesk]' },
  { art: 'folder', title: 'final' },
  { art: 'xterm', title: '[xterm]' },
  { art: 'chrome', title: '[16:56 min - ...' },
  { art: 'audacity', title: '[Audacity]' },
  { art: 'terminal', title: 'Терминал' },
  { art: 'xml', title: 'Synfig-22-fin...' },
  { art: 'blender', title: '[Blender* [/...' },
  { art: 'unison', title: '[Unison [wo...' },
  { art: 'obs', title: '[OBS 26.0.2 ...' },
];

function Taskbar() {
  return (
    <footer className="absolute inset-x-0 bottom-0 h-[18px] flex items-stretch bg-[#353535] text-[8px] text-[#d5d5d5] whitespace-nowrap">
      <div className="w-[157px] shrink-0 flex items-center pl-0.5 pr-3.5">
        <button className="flex items-center gap-[3px]">
          <svg viewBox="0 0 16 16" className="size-4">
            <path d="M0 1h11a4.500 4.500 0 0 1 4.500 4.500V15H6a5 5 0 0 1-5-5z" fill="#a9d18a" />
            <path d="M4 4v5a3 3 0 0 0 3 3h4a2 2 0 0 0 2-2V7a1.500 1.500 0 0 0-3 0v3M10 7a1.500 1.500 0 0 0-3 0v3" fill="none" stroke="#fff" strokeWidth="1.400" />
          </svg>
          Menu
        </button>
        <div className="ml-auto flex items-center gap-1">
          <button aria-label="Рабочий стол" className="mr-1 w-[14px] h-3 bg-[#86b55c]" />
          <button aria-label="Терминал"><svg viewBox="0 0 16 16" className="size-3.5">{taskArt.terminal}</svg></button>
          <button aria-label="Firefox">
            <svg viewBox="0 0 16 16" className="size-3.5"><rect width="16" height="16" rx="3" fill="#e98a52" /><path d="M3 5c1 8 8 8 9.500 4S10 4 9 3c1 3-1 4-2 3" fill="none" stroke="#fff" strokeWidth="2" /></svg>
          </button>
          <button aria-label="Мой компьютер">
            <svg viewBox="0 0 16 16" className="size-3.5"><rect x="1" y="2" width="14" height="9" fill="#6c7884" /><path d="M6 11h4v2h2v1.500H4V13h2z" fill="#eee" /></svg>
          </button>
          <button aria-label="Unison">
            <svg viewBox="0 0 14 16" className="w-3.5 h-4"><rect width="14" height="16" rx="2" fill="#1c1c14" /><path d="M4 2v8a3 3 0 0 0 6 0V2" fill="none" stroke="#e7b733" strokeWidth="2.400" /></svg>
          </button>
        </div>
      </div>
      <div className="flex-1 min-w-0 flex">
        {tasks.map((t) => (
          <button key={t.title} className="flex-1 min-w-0 pl-0.5 flex items-center gap-[5px] text-[#bdbdbd]">
            <svg viewBox="0 0 16 16" className="size-[11px] shrink-0" aria-hidden="true">{taskArt[t.art]}</svg>
            {t.title}
          </button>
        ))}
      </div>
      <button className="w-[74px] shrink-0 pl-0.5 flex items-center gap-[5px] bg-[#9bc477] text-white">
        <Icon name="drop" /> Synfig Studio
      </button>
      <button aria-label="Группа окон" className="ml-[3px] w-[30px] shrink-0 flex items-center justify-center bg-[#c5d8b3] border border-[#8aa675]">
        <Icon name="drop" />
      </button>
      <span className="w-8 shrink-0 bg-[#272727]" />
      <div className="w-[246px] shrink-0 flex items-center pl-[7px]">
        <span className="w-[18px] h-full bg-[#ef2f3a] flex items-center justify-center">
          <svg viewBox="0 0 16 10" className="w-4 h-2.5"><path d="M5.500 0l5 5-5 5-5-5z" fill="#fff" /><path d="M10 0l5 5-5 5-1.500-1.500L12 5 8.500 1.500z" fill="#fff" /></svg>
        </span>
        <div className="flex-1 pl-1 pr-1 flex items-center justify-between">
          <span className="text-[9px] text-[#41518f]">EN</span>
          <span className="ml-1">en</span>
          <svg viewBox="0 0 16 16" className="size-3.5"><path d="M8 1l6 2c0 6-1 10-6 12-5-2-6-6-6-12z" fill="#3b78c2" stroke="#e8eef6" strokeWidth="1.600" /><path d="M7.200 5h1.600v6H7.200z" fill="#fff" /></svg>
          <svg viewBox="0 0 16 16" className="size-3.5"><circle cx="8" cy="8" r="7.500" fill="#56b52b" /><path d="M4 8l3 3.500 5.500-7" fill="none" stroke="#fff" strokeWidth="2" /></svg>
          <svg viewBox="0 0 16 16" className="size-3"><path d="M2 2.500h12v9.500H8l-2 2v-2H2z" fill="none" stroke="#ddd" strokeWidth="1.800" /></svg>
          <svg viewBox="0 0 16 16" className="size-3.5"><circle cx="8" cy="8" r="7" fill="#111" stroke="#eee" strokeWidth="1.500" /><path d="M8 8C5 7 5 5 6.500 3M8 8c3-1 5 0 5 2M8 8c0 3-2 4-4 3" stroke="#eee" fill="none" strokeWidth="1.600" /><circle cx="3.500" cy="12.500" r="3.500" fill="#e02020" /></svg>
          <svg viewBox="0 0 16 16" className="size-3"><circle cx="8" cy="9" r="4.500" fill="none" stroke="#ddd" strokeWidth="3.500" strokeDasharray="4 1" /><path d="M8 4l6-2" stroke="#ddd" strokeWidth="2" /></svg>
          <svg viewBox="0 0 16 16" className="size-3"><rect x="5.500" y="1" width="5" height="8" rx="2.500" fill="#e5e5e5" /><path d="M3.500 7a4.500 4.500 0 0 0 9 0M8 11.500V15" fill="none" stroke="#e5e5e5" strokeWidth="1.500" /></svg>
          <svg viewBox="0 0 16 16" className="size-3"><path d="M1 5.500h3L8 2v12l-4-3.500H1z" fill="#e5e5e5" /><path d="M10 5.500a3.500 3.500 0 0 1 0 5M12 3a7 7 0 0 1 0 10" fill="none" stroke="#e5e5e5" strokeWidth="1.400" /></svg>
        </div>
        <time>Вт, 19 июл, 14:32</time>
      </div>
    </footer>
  );
}

// Pointer with the highlight ring of the screen recorder
function Pointer() {
  return (
    <svg viewBox="0 0 32 32" className="absolute left-[348px] top-[130px] size-8 pointer-events-none" aria-hidden="true">
      <circle cx="16" cy="16" r="15.700" fill="#b3ba39" fillOpacity=".92" />
      <path d="M12.500 7.500v13l3-2.700 2 4.700 2.300-1-2-4.500h4z" fill="#fff" stroke="#222" strokeWidth="1.100" />
    </svg>
  );
}

export default function App() {
  return (
    <div className="relative w-full h-screen overflow-hidden bg-[#2b2149] font-['Noto_Sans',sans-serif]">
      <Desktop />
      <FileManagerWindow />
      <EditorWindow />
      <SynfigWindow />
      <Taskbar />
      <Pointer />
    </div>
  );
}
